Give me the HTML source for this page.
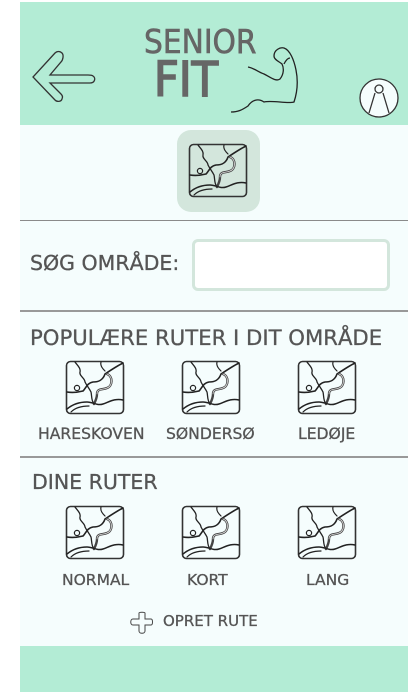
<!DOCTYPE html>
<html><head><meta charset="utf-8"><style>
html,body{margin:0;padding:0;background:#fff;}
body{width:420px;height:700px;position:relative;overflow:hidden;font-family:"DejaVu Sans","Liberation Sans",sans-serif;color:#555;}
.frame{position:absolute;left:20px;top:2px;width:388px;height:690px;background:#f5fdfd;}
.hdr{position:absolute;left:20px;top:2px;width:388px;height:123px;background:#b3ecd5;}
.ftr{position:absolute;left:20px;top:646px;width:388px;height:46px;background:#b3ecd5;}
.line{position:absolute;left:20px;width:388px;height:1px;background:#8a8a8a;}
.t{position:absolute;white-space:nowrap;-webkit-text-stroke:0.3px #555;}
.map{position:absolute;}
</style></head><body>
<svg width="0" height="0" style="position:absolute">
<defs>
<g id="m" fill="none" stroke="#222" stroke-linecap="round">
<rect x="1.5" y="1.5" width="57" height="52" rx="4" stroke="#333" stroke-width="1.6"/>
<path d="M10 2 C12 5 16 8 15 12 C14 16 20 18 20 22 C22 26 24 28 26 32 C27 36 26 40 29 44" stroke-width="1.3"/>
<path d="M2 32 C8 33 14 32 18 31 C21 28 22 23 28 22 C34 22 38 20 40 14 C46 10 52 6 58 3" stroke-width="1.6"/>
<path d="M36 2 C35 6 38 9 40 11" stroke-width="1.2"/>
<path d="M42 14 C48 16 48 26 42 28 C38 30 32 28 32 34 C32 38 30 42 29 44" stroke-width="2.4" stroke="#444"/>
<path d="M42 14 C48 16 48 26 42 28 C38 30 32 28 32 34" stroke-width="0.8" stroke="#ddd"/>
<circle cx="12" cy="28" r="2.6" stroke-width="1.2"/>
<path d="M2 49 C8 44 14 42 22 42 C28 42 32 46 38 44 C44 42 50 38 58 40" stroke-width="1.5"/>
<path d="M6 52 C10 48 16 46 24 46" stroke-width="1.2"/>
</g>
</defs></svg>
<div class="frame"></div>
<div class="hdr"></div>
<div class="ftr"></div>
<svg style="position:absolute;left:30px;top:50px" width="70" height="55" viewBox="0 0 70 55" fill="none" stroke="#333" stroke-width="1.3">
<path d="M32 3 C30 1 27 1 25 3 L3 27 L25 50 C27 52 31 52 32 49 C33 47 32 45 31 44 L20 33 L60 33 C65 33 66 28 63 26 C62 25 60 25 58 25 L20 25 L31 12 C33 10 34 5 32 3 Z"/>
</svg>
<div class="t" style="left:144px;top:22px;font-size:33px;color:#666;-webkit-text-stroke:0.6px #666;font-family:'DejaVu Sans Condensed','DejaVu Sans',sans-serif;">SENIOR</div>
<div class="t" style="left:154px;top:52px;font-size:48px;color:#666;-webkit-text-stroke:1.6px #666;font-family:'DejaVu Sans Condensed','DejaVu Sans',sans-serif;">FIT</div>
<svg style="position:absolute;left:228px;top:44px" width="75" height="70" viewBox="0 0 75 70" fill="none" stroke="#222" stroke-width="1.3">
<path d="M20 23 C26 24 30 28 36 30 C42 33 48 38 52 35 C56 30 56 24 54 20 C52 18 46 16 46 12 C46 6 52 3 56 4 C62 6 66 16 68 26 C70 36 70 46 66 58 C60 60 44 56 36 58 C30 54 24 56 20 62 C14 66 10 68 3 68"/>
<path d="M56 20 C58 16 60 14 62 14"/>
</svg>
<svg style="position:absolute;left:358px;top:77px" width="42" height="42" viewBox="0 0 42 42" fill="#f5fdfd" stroke="#333" stroke-width="1.3">
<circle cx="21" cy="21" r="19"/>
<circle cx="21" cy="12" r="4"/>
<path d="M17 16 L11 36 M25 16 L31 36"/>
</svg>
<div style="position:absolute;left:177px;top:130px;width:83px;height:82px;border-radius:14px;background:#d3e6dc;"></div>
<svg class="map" style="left:188px;top:143px" width="60" height="55" viewBox="0 0 60 55"><use href="#m"/></svg>
<div class="line" style="top:220px"></div>
<div class="t" style="left:30px;top:251px;font-size:20.5px;">SØG OMRÅDE:</div>
<div style="position:absolute;left:192px;top:239px;width:192px;height:46px;background:#fff;border:3px solid #d3e6dc;border-radius:6px;"></div>
<div class="line" style="top:310px;background:#999;height:2px"></div>
<div class="t" style="left:30px;top:325px;font-size:21.2px;">POPULÆRE RUTER I DIT OMRÅDE</div>
<svg class="map" style="left:65px;top:360px" width="60" height="55" viewBox="0 0 60 55"><use href="#m"/></svg>
<svg class="map" style="left:181px;top:360px" width="60" height="55" viewBox="0 0 60 55"><use href="#m"/></svg>
<svg class="map" style="left:297px;top:360px" width="60" height="55" viewBox="0 0 60 55"><use href="#m"/></svg>
<div class="t" style="left:38px;top:425px;font-size:15.6px;">HARESKOVEN</div>
<div class="t" style="left:166px;top:425px;font-size:15.6px;">SØNDERSØ</div>
<div class="t" style="left:298px;top:425px;font-size:15.6px;">LEDØJE</div>
<div class="line" style="top:456px;background:#999;height:2px"></div>
<div class="t" style="left:32px;top:470px;font-size:20.5px;">DINE RUTER</div>
<svg class="map" style="left:65px;top:505px" width="60" height="55" viewBox="0 0 60 55"><use href="#m"/></svg>
<svg class="map" style="left:181px;top:505px" width="60" height="55" viewBox="0 0 60 55"><use href="#m"/></svg>
<svg class="map" style="left:297px;top:505px" width="60" height="55" viewBox="0 0 60 55"><use href="#m"/></svg>
<div class="t" style="left:62px;top:571px;font-size:15.5px;">NORMAL</div>
<div class="t" style="left:187px;top:571px;font-size:15.5px;">KORT</div>
<div class="t" style="left:306px;top:571px;font-size:15.5px;">LANG</div>
<svg style="position:absolute;left:130px;top:611px" width="24" height="24" viewBox="0 0 24 24" fill="none" stroke="#444" stroke-width="1">
<path d="M9 2 C9 1 15 1 15 2 L15 8 L21 8 C23 8 23 14 21 14 L15 14 L15 20 C15 23 9 23 9 20 L9 14 L3 14 C0 14 0 8 3 8 L9 8 Z"/>
</svg>
<div class="t" style="left:163px;top:612px;font-size:15px;">OPRET RUTE</div>
</body></html>
